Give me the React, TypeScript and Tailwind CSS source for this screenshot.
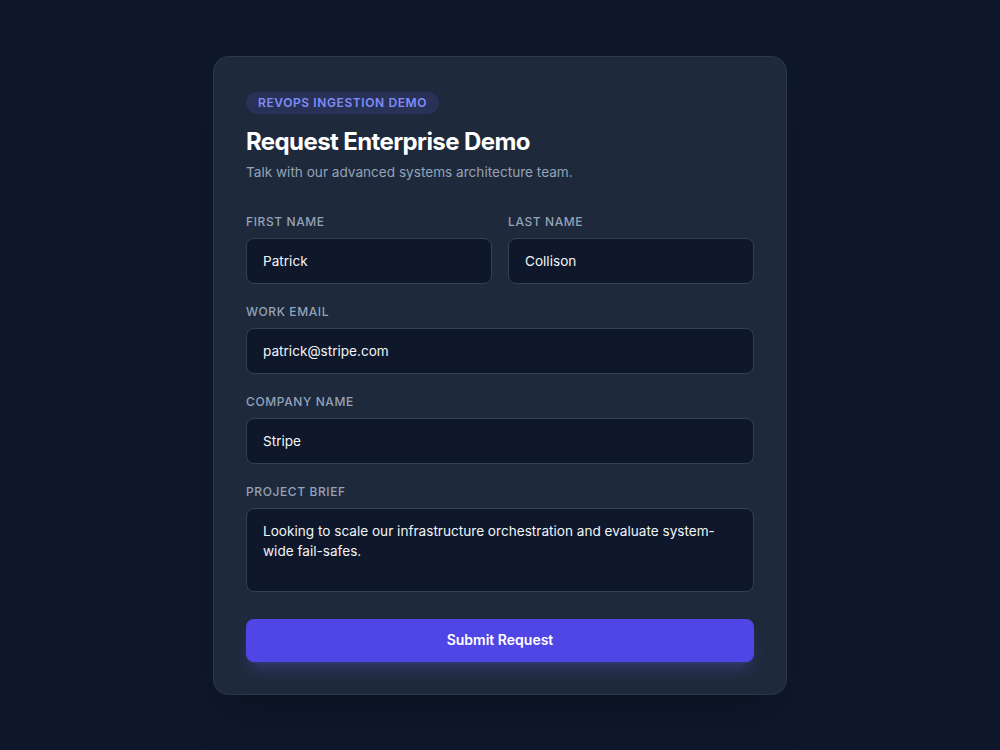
import React from "react";

const labelCls =
  "block mb-2 text-xs font-medium uppercase tracking-wider text-[#94a3b8]";
const inputCls =
  "block w-full rounded-lg border border-[#334155] bg-[#0f172a] px-4 py-3 text-[13.6px] leading-5 text-[#f1f5f9] outline-none";

function Field({ label, value }: { label: string; value: string }) {
  return (
    <div>
      <label className={labelCls}>{label}</label>
      <input className={inputCls} defaultValue={value} />
    </div>
  );
}

export default function App() {
  return (
    <div
      className="min-h-screen w-full bg-[#0f172a] flex items-center justify-center"
      style={{ fontFamily: "Inter, 'Noto Sans', sans-serif" }}
    >
      <div className="w-[574px] rounded-2xl border border-[#334155]/60 bg-[#1e293b] p-8 shadow-2xl">
        <span className="inline-flex items-center rounded-full bg-[#6366f1]/15 px-3 py-[3px] text-xs font-semibold uppercase tracking-wider text-[#818cf8]">
          RevOps Ingestion Demo
        </span>
        <h1 className="mt-3 text-2xl font-bold leading-8 tracking-tight text-white">
          Request Enterprise Demo
        </h1>
        <p className="mt-1 text-[13.6px] leading-5 text-[#94a3b8]">
          Talk with our advanced systems architecture team.
        </p>

        <form className="mt-8 flex flex-col gap-5" onSubmit={(e) => e.preventDefault()}>
          <div className="grid grid-cols-2 gap-4">
            <Field label="First Name" value="Patrick" />
            <Field label="Last Name" value="Collison" />
          </div>
          <Field label="Work Email" value="patrick@stripe.com" />
          <Field label="Company Name" value="Stripe" />
          <div>
            <label className={labelCls}>Project Brief</label>
            <textarea
              className={inputCls + " h-[84px] resize-none"}
              defaultValue="Looking to scale our infrastructure orchestration and evaluate system-wide fail-safes."
            />
          </div>
          <button
            type="submit"
            className="mt-[7px] h-[43px] w-full rounded-lg bg-[#4f46e5] text-sm font-semibold text-white shadow-lg shadow-[#6366f1]/25"
          >
            Submit Request
          </button>
        </form>
      </div>
    </div>
  );
}
